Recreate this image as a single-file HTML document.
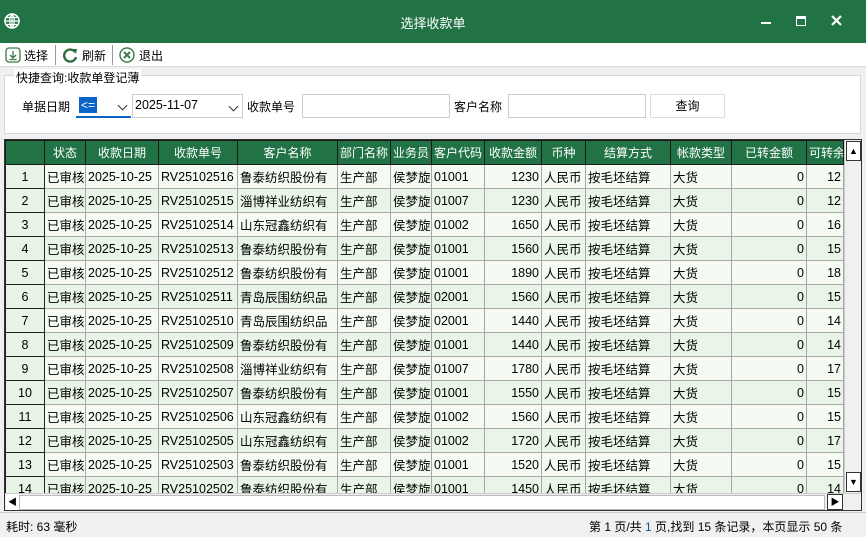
<!DOCTYPE html>
<html><head><meta charset="utf-8"><style>
*{margin:0;padding:0;box-sizing:border-box}
body{width:866px;height:537px;overflow:hidden;background:#f0f0f0;font-family:"Liberation Sans","Noto Sans CJK SC",sans-serif;font-size:12px;color:#000;position:relative}
.title{position:absolute;left:0;top:0;width:866px;height:43px;background:#217346;color:#fff}
.title .t{position:absolute;left:0;width:866px;top:13px;text-align:center;font-size:13px}
.tb{position:absolute;left:0;top:43px;width:866px;height:24px;background:#fff;border-bottom:1px solid #ddd}
.tb span{position:absolute;top:4px;font-size:12px}
.grp{position:absolute;left:4px;top:75px;width:857px;height:59px;border:1px solid #d8d8d8;background:#fff}
.leg{position:absolute;left:14px;top:69px;background:#fff;padding:0 2px;font-size:12px}
.lbl{position:absolute;top:98px;font-size:12px}
.inp{position:absolute;top:94px;height:24px;background:#fff;border:1px solid #ccc}
.grid{position:absolute;left:4px;top:139px;width:858px;height:372px;border:1px solid #333;background:#fff;overflow:hidden}
table{position:absolute;left:0px;top:0px;border-collapse:collapse;table-layout:fixed;width:838px}
td,th{height:24px;border:1px solid #a8a8a8;white-space:nowrap;overflow:hidden;padding:0 2px;font-weight:normal;font-size:12.5px}
th{background:#217346;color:#fff;text-align:center;border-color:#1a1a1a;font-size:12px}
td.n{text-align:center;background:#e8f4e6;border-color:#222}
td.r{text-align:right}
tr.o td{background:#f5fbf3}
tr.e td{background:#e9f5e7}
tr td.n{background:#e8f4e6}
.vs{position:absolute;left:839px;top:0;width:17px;height:353px;background:#f0f0f0;border-left:1px solid #ccc}
.hs{position:absolute;left:0;top:353px;width:856px;height:17px;background:#f0f0f0;border-top:1px solid #ccc}
.status{position:absolute;left:0;top:512px;width:866px;height:25px;background:#f0f0f0;border-top:1px solid #ccc}
.chev{position:absolute;right:5px;top:8px;width:7px;height:7px;border-right:1.3px solid #333;border-bottom:1.3px solid #333;transform:rotate(45deg)}
</style></head><body>
<div class="title">
<svg style="position:absolute;left:4px;top:13px" width="16" height="16" viewBox="0 0 16 16"><circle cx="8" cy="8" r="7" fill="none" stroke="#fff" stroke-width="1.6"/><path d="M1 8h14M8 1v14M3 4.5h10M3 11.5h10M8 1c-3 3-3 11 0 14M8 1c3 3 3 11 0 14" stroke="#fff" stroke-width="1.2" fill="none"/></svg>
<div class="t">选择收款单</div>
<div style="position:absolute;left:761px;top:22px;width:10px;height:2px;background:#fff"></div>
<div style="position:absolute;left:796px;top:16px;width:10px;height:10px;border:1.5px solid #fff;border-top-width:3px"></div>
<svg style="position:absolute;left:831px;top:15px" width="11" height="11"><path d="M1 1l9 9M10 1l-9 9" stroke="#fff" stroke-width="2.2"/></svg>
</div>
<div class="tb">
<svg style="position:absolute;left:5px;top:4px" width="16" height="16"><rect x="1" y="1" width="14" height="14" rx="3" fill="none" stroke="#3a7a4a" stroke-width="1.3"/><path d="M8 4v7M5 8l3 3 3-3M4.5 12.5h7" stroke="#3a7a4a" stroke-width="1.3" fill="none"/></svg>
<span style="left:24px">选择</span>
<div style="position:absolute;left:55px;top:2px;width:1px;height:20px;background:#999"></div>
<svg style="position:absolute;left:62px;top:4px" width="16" height="16"><path d="M13 5A6 6 0 1 0 14 10" stroke="#2f6f44" stroke-width="2.4" fill="none"/><path d="M10 2l5 0-1 5z" fill="#2f6f44"/></svg>
<span style="left:82px">刷新</span>
<div style="position:absolute;left:112px;top:2px;width:1px;height:20px;background:#999"></div>
<svg style="position:absolute;left:119px;top:4px" width="16" height="16"><circle cx="8" cy="8" r="7" fill="none" stroke="#3a7a4a" stroke-width="1.4"/><path d="M5 5l6 6M11 5l-6 6" stroke="#3a7a4a" stroke-width="2"/></svg>
<span style="left:139px">退出</span>
</div>
<div class="grp"></div>
<div class="leg">快捷查询:收款单登记薄</div>
<span class="lbl" style="left:22px">单据日期</span>
<div class="inp" style="left:76px;width:55px;border:none;border-bottom:2px solid #0a64c8"><span style="position:absolute;left:3px;top:3px;background:#0a64c8;color:#fff;padding:0 2px;height:16px;line-height:16px">&lt;=</span><span class="chev"></span></div>
<div class="inp" style="left:132px;width:111px"><span style="position:absolute;left:2px;top:3px;font-size:12.5px">2025-11-07</span><span class="chev"></span></div>
<span class="lbl" style="left:247px">收款单号</span>
<div class="inp" style="left:302px;width:148px"></div>
<span class="lbl" style="left:454px">客户名称</span>
<div class="inp" style="left:508px;width:138px"></div>
<div class="inp" style="left:650px;width:75px;background:#fff;border-color:#ddd;text-align:center;line-height:22px">查询</div>
<div class="grid">
<table>
<colgroup><col style="width:39px"><col style="width:41px"><col style="width:73px"><col style="width:79px"><col style="width:100px"><col style="width:53px"><col style="width:41px"><col style="width:53px"><col style="width:57px"><col style="width:44px"><col style="width:85px"><col style="width:61px"><col style="width:75px"><col style="width:37px"></colgroup>
<tr><th></th><th>状态</th><th>收款日期</th><th>收款单号</th><th>客户名称</th><th>部门名称</th><th>业务员</th><th>客户代码</th><th>收款金额</th><th>币种</th><th>结算方式</th><th>帐款类型</th><th>已转金额</th><th>可转余</th></tr>
<tr class="o"><td class="n">1</td><td>已审核</td><td>2025-10-25</td><td>RV25102516</td><td>鲁泰纺织股份有</td><td>生产部</td><td>侯梦旋</td><td>01001</td><td class="r">1230</td><td>人民币</td><td>按毛坯结算</td><td>大货</td><td class="r">0</td><td class="r">12</td></tr>
<tr class="e"><td class="n">2</td><td>已审核</td><td>2025-10-25</td><td>RV25102515</td><td>淄博祥业纺织有</td><td>生产部</td><td>侯梦旋</td><td>01007</td><td class="r">1230</td><td>人民币</td><td>按毛坯结算</td><td>大货</td><td class="r">0</td><td class="r">12</td></tr>
<tr class="o"><td class="n">3</td><td>已审核</td><td>2025-10-25</td><td>RV25102514</td><td>山东冠鑫纺织有</td><td>生产部</td><td>侯梦旋</td><td>01002</td><td class="r">1650</td><td>人民币</td><td>按毛坯结算</td><td>大货</td><td class="r">0</td><td class="r">16</td></tr>
<tr class="e"><td class="n">4</td><td>已审核</td><td>2025-10-25</td><td>RV25102513</td><td>鲁泰纺织股份有</td><td>生产部</td><td>侯梦旋</td><td>01001</td><td class="r">1560</td><td>人民币</td><td>按毛坯结算</td><td>大货</td><td class="r">0</td><td class="r">15</td></tr>
<tr class="o"><td class="n">5</td><td>已审核</td><td>2025-10-25</td><td>RV25102512</td><td>鲁泰纺织股份有</td><td>生产部</td><td>侯梦旋</td><td>01001</td><td class="r">1890</td><td>人民币</td><td>按毛坯结算</td><td>大货</td><td class="r">0</td><td class="r">18</td></tr>
<tr class="e"><td class="n">6</td><td>已审核</td><td>2025-10-25</td><td>RV25102511</td><td>青岛辰围纺织品</td><td>生产部</td><td>侯梦旋</td><td>02001</td><td class="r">1560</td><td>人民币</td><td>按毛坯结算</td><td>大货</td><td class="r">0</td><td class="r">15</td></tr>
<tr class="o"><td class="n">7</td><td>已审核</td><td>2025-10-25</td><td>RV25102510</td><td>青岛辰围纺织品</td><td>生产部</td><td>侯梦旋</td><td>02001</td><td class="r">1440</td><td>人民币</td><td>按毛坯结算</td><td>大货</td><td class="r">0</td><td class="r">14</td></tr>
<tr class="e"><td class="n">8</td><td>已审核</td><td>2025-10-25</td><td>RV25102509</td><td>鲁泰纺织股份有</td><td>生产部</td><td>侯梦旋</td><td>01001</td><td class="r">1440</td><td>人民币</td><td>按毛坯结算</td><td>大货</td><td class="r">0</td><td class="r">14</td></tr>
<tr class="o"><td class="n">9</td><td>已审核</td><td>2025-10-25</td><td>RV25102508</td><td>淄博祥业纺织有</td><td>生产部</td><td>侯梦旋</td><td>01007</td><td class="r">1780</td><td>人民币</td><td>按毛坯结算</td><td>大货</td><td class="r">0</td><td class="r">17</td></tr>
<tr class="e"><td class="n">10</td><td>已审核</td><td>2025-10-25</td><td>RV25102507</td><td>鲁泰纺织股份有</td><td>生产部</td><td>侯梦旋</td><td>01001</td><td class="r">1550</td><td>人民币</td><td>按毛坯结算</td><td>大货</td><td class="r">0</td><td class="r">15</td></tr>
<tr class="o"><td class="n">11</td><td>已审核</td><td>2025-10-25</td><td>RV25102506</td><td>山东冠鑫纺织有</td><td>生产部</td><td>侯梦旋</td><td>01002</td><td class="r">1560</td><td>人民币</td><td>按毛坯结算</td><td>大货</td><td class="r">0</td><td class="r">15</td></tr>
<tr class="e"><td class="n">12</td><td>已审核</td><td>2025-10-25</td><td>RV25102505</td><td>山东冠鑫纺织有</td><td>生产部</td><td>侯梦旋</td><td>01002</td><td class="r">1720</td><td>人民币</td><td>按毛坯结算</td><td>大货</td><td class="r">0</td><td class="r">17</td></tr>
<tr class="o"><td class="n">13</td><td>已审核</td><td>2025-10-25</td><td>RV25102503</td><td>鲁泰纺织股份有</td><td>生产部</td><td>侯梦旋</td><td>01001</td><td class="r">1520</td><td>人民币</td><td>按毛坯结算</td><td>大货</td><td class="r">0</td><td class="r">15</td></tr>
<tr class="e"><td class="n">14</td><td>已审核</td><td>2025-10-25</td><td>RV25102502</td><td>鲁泰纺织股份有</td><td>生产部</td><td>侯梦旋</td><td>01001</td><td class="r">1450</td><td>人民币</td><td>按毛坯结算</td><td>大货</td><td class="r">0</td><td class="r">14</td></tr>
</table>
<div class="vs"><div style="position:absolute;left:1px;top:1px;width:15px;height:20px;background:#fff;border:1px solid #333;text-align:center;font-size:9px;line-height:18px">▲</div><div style="position:absolute;left:1px;top:332px;width:15px;height:20px;background:#fff;border:1px solid #333;text-align:center;font-size:9px;line-height:18px">▼</div></div>
<div class="hs"><div style="position:absolute;left:1px;top:0;width:13px;height:16px;background:#fff;text-align:center;font-size:9px;line-height:16px">◀</div><div style="position:absolute;left:14px;top:1px;width:806px;height:15px;background:#fff;border:1px solid #bbb"></div><div style="position:absolute;left:822px;top:0;width:16px;height:16px;background:#fff;border:1px solid #333;text-align:center;font-size:9px;line-height:14px">▶</div></div>
</div>
<div class="status"><span style="position:absolute;left:6px;top:5px">耗时: 63 毫秒</span><span style="position:absolute;left:589px;top:5px;width:260px;overflow:hidden;white-space:nowrap">第 1 页/共 <span style="color:#1a4fa0">1</span> 页,找到 15 条记录，本页显示 50 条</span></div>
</body></html>
